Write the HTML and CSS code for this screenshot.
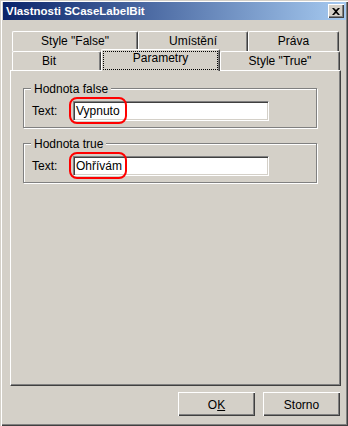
FILE: index.html
```html
<!DOCTYPE html>
<html lang="cs">
<head>
    <meta charset="UTF-8">
    <title>Vlastnosti SCaseLabelBit</title>
    <link rel="stylesheet" href="styles.css">
</head>
<body>

    <div class="window">
        <div class="titlebar">
            <span class="title">Vlastnosti SCaseLabelBit</span>
            <div class="close">
                <svg width="8" height="7" viewBox="0 0 8 7"><path d="M0 0h2l2 2 2-2h2L5 3.5 8 7H6L4 5 2 7H0l3-3.5z" fill="#000"/></svg>
            </div>
        </div>

        <div class="tabs">
            <div class="tab-row">
                <div class="tab tab-false">Style "False"</div>
                <div class="tab tab-place">Umístění</div>
                <div class="tab tab-rights">Práva</div>
            </div>
            <div class="tab-row front">
                <div class="tab tab-bit">Bit</div>
                <div class="tab tab-params active"><div class="focus">Parametry</div></div>
                <div class="tab tab-true">Style "True"</div>
            </div>
        </div>

        <div class="panel">
            <div class="group">
                <div class="group-title">Hodnota false</div>
                <div class="field">
                    <span class="field-label">Text:</span>
                    <div class="input">Vypnuto<span class="mark"></span></div>
                </div>
            </div>
            <div class="group">
                <div class="group-title">Hodnota true</div>
                <div class="field">
                    <span class="field-label">Text:</span>
                    <div class="input">Ohřívám<span class="mark"></span></div>
                </div>
            </div>
        </div>

        <div class="buttons">
            <button>O<span class="u">K</span></button>
            <button>Storno</button>
        </div>
    </div>

</body>
</html>
```

FILE: styles.css
```css
body {
    margin: 0;
    background-color: #d4d0c8;
    font-family: "Liberation Sans", Arial, sans-serif;
    font-size: 12px;
    color: #000;
}
.window {
    width: 348px;
    height: 426px;
    box-sizing: border-box;
    padding: 2px;
    box-shadow: inset 1px 1px #d4d0c8, inset 2px 2px #fff, inset -1px -1px #404040, inset -2px -2px #808080;
}
.titlebar {
    margin-left: 1px;
    height: 18px;
    padding-left: 3px;
    display: flex;
    align-items: center;
    justify-content: space-between;
    background: linear-gradient(to right, #0a246a, #a6caf0);
    color: #fff;
    font-weight: bold;
    font-size: 11.5px;
}
.close {
    width: 16px;
    height: 14px;
    margin-right: 2px;
    display: flex;
    align-items: center;
    justify-content: center;
    background-color: #d4d0c8;
    box-shadow: inset 1px 1px #fff, inset -1px -1px #404040, inset -2px -2px #808080;
}
.tabs {
    margin: 11px 5px 0 8px;
}
.tab-row {
    display: flex;
    align-items: flex-start;
    padding-left: 2px;
}
.tab {
    box-sizing: border-box;
    height: 20px;
    line-height: 19px;
    text-align: center;
    border-top: 1px solid #fff;
    border-left: 1px solid #fff;
    border-right: 1px solid #404040;
    border-radius: 2px 2px 0 0;
    box-shadow: inset -1px 0 #808080;
    white-space: nowrap;
}
.front .tab {
    height: 19px;
    line-height: 18px;
}
.tab-false { width: 126px; }
.tab-place { width: 110px; }
.tab-rights { width: 91px; }
.tab-bit { width: 89px; padding-right: 15px; }
.tab-params { width: 119px; }
.tab-true { width: 120px; }
.front .tab.active {
    position: relative;
    z-index: 2;
    height: 22px;
    margin-top: -2px;
    margin-bottom: -1px;
    background-color: #d4d0c8;
}
.focus {
    height: 19px;
    box-sizing: border-box;
    margin: 1px 1px 0 1px;
    border: 1px dotted #000;
    line-height: 13px;
}
.panel {
    position: relative;
    z-index: 1;
    height: 316px;
    box-sizing: border-box;
    margin: 0 5px 0 8px;
    padding: 17px 0 0 12px;
    border-top: 1px solid #fff;
    border-left: 1px solid #fff;
    border-right: 1px solid #404040;
    border-bottom: 1px solid #404040;
    box-shadow: inset -1px -1px #808080;
}
.group {
    width: 294px;
    height: 40px;
    box-sizing: border-box;
    border: 1px solid #808080;
    box-shadow: inset 1px 1px #fff, 1px 1px #fff;
}
.group + .group {
    margin-top: 15px;
}
.group-title {
    width: max-content;
    margin: -7px 0 0 7px;
    padding: 0 3px;
    line-height: 14px;
    background-color: #d4d0c8;
}
.field {
    display: flex;
    align-items: center;
    margin-top: 5px;
    padding-left: 8px;
}
.field-label {
    width: 41px;
}
.input {
    position: relative;
    width: 196px;
    height: 20px;
    box-sizing: border-box;
    padding-left: 2px;
    line-height: 18px;
    background-color: #fff;
    border-top: 1px solid #808080;
    border-left: 1px solid #808080;
    border-right: 1px solid #fff;
    border-bottom: 1px solid #fff;
    box-shadow: inset 1px 1px #404040, inset -1px -1px #d4d0c8;
}
.mark {
    position: absolute;
    left: -5px;
    top: -5px;
    width: 58px;
    height: 27px;
    box-sizing: border-box;
    border: 2px solid #f00;
    border-radius: 8px;
}
.buttons {
    display: flex;
    justify-content: flex-end;
    gap: 8px;
    margin: 6px 6px 0 0;
}
button {
    width: 77px;
    height: 24px;
    padding: 2px 0 0;
    border: none;
    background-color: #d4d0c8;
    font-family: inherit;
    font-size: 12px;
    color: #000;
    box-shadow: inset 1px 1px #fff, inset -1px -1px #404040, inset -2px -2px #808080;
}
.u {
    text-decoration: underline;
}
```
